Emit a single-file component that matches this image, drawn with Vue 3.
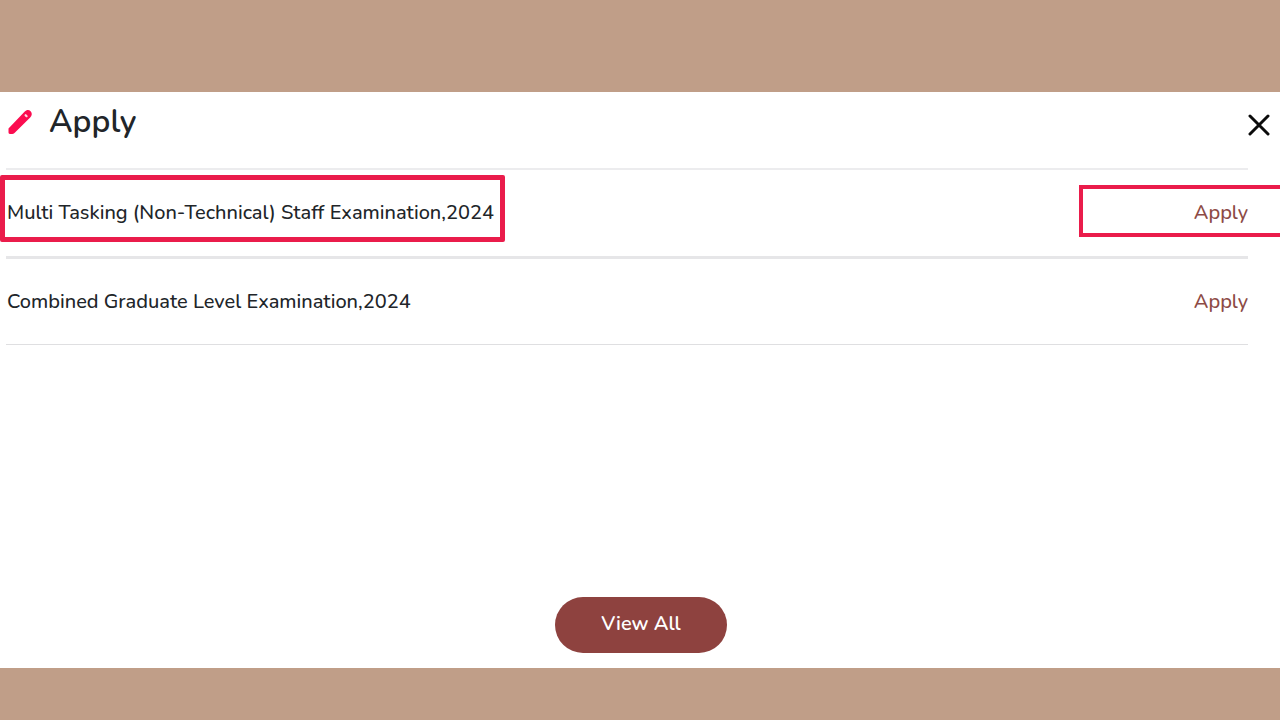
<script setup>
const exams = [
  { id: 1, title: 'Multi Tasking (Non-Technical) Staff Examination,2024', marked: true },
  { id: 2, title: 'Combined Graduate Level Examination,2024', marked: false }
]
</script>

<template>
  <main class="page">
    <section class="panel" aria-labelledby="panel-title">
      <header class="head">
        <svg class="pencil" viewBox="0 0 26 26" aria-hidden="true">
          <path
            fill="#fb0d50"
            d="M1.500 19.600 17.500 2.800C19.500.8 21.700.4 23.600 2.200c1.800 1.800 1.500 4.200-.4 6.200L7.500 24Q6.500 25 5.200 25H2.800Q1.500 25 1.500 23.600Z"
          />
          <path d="m18.600 6.200 1 1" stroke="#ffd3df" stroke-width="2.200" stroke-linecap="round" />
        </svg>
        <h1 id="panel-title">Apply</h1>
        <button class="close" type="button" aria-label="Close">
          <svg viewBox="0 0 22 22" aria-hidden="true">
            <path d="M2 2 20 20M20 2 2 20" stroke="#0b0b0b" stroke-width="3" stroke-linecap="round" />
          </svg>
        </button>
      </header>

      <ul class="list">
        <li v-for="exam in exams" :key="exam.id" class="row" :class="{ marked: exam.marked }">
          <span class="title">{{ exam.title }}</span>
          <a class="apply" href="#">Apply</a>
        </li>
      </ul>

      <footer class="foot">
        <button class="view-all" type="button">View All</button>
      </footer>
    </section>
  </main>
</template>

<style>
body {
  margin: 0;
  background: #c09e88;
}
</style>

<style scoped>
.page {
  box-sizing: border-box;
  min-height: 100vh;
  padding: 92px 0 52px;
  display: flex;
  flex-direction: column;
  overflow: hidden;
  background: #c09e88;
  color: #212529;
  font-family: Nunito, Lato, sans-serif;
}
.panel {
  flex: 1;
  display: flex;
  flex-direction: column;
  background: #fff;
}
.head {
  display: flex;
  align-items: center;
  height: 60px;
  padding: 0 10px 16px 7px;
}
.pencil {
  width: 26px;
  height: 26px;
  margin-right: 16px;
}
h1 {
  flex: 1;
  margin: 0;
  font-size: 32px;
  line-height: 40px;
  font-weight: 600;
}
.close {
  display: flex;
  padding: 0;
  margin-top: 6px;
  border: 0;
  background: none;
  cursor: pointer;
}
.close svg {
  width: 22px;
  height: 22px;
}
.list {
  list-style: none;
  margin: 0 32px 0 6px;
  padding: 0;
  border-top: 2px solid #ececee;
}
.row {
  box-sizing: border-box;
  display: flex;
  align-items: center;
  justify-content: space-between;
  height: 86px;
  border-bottom: 1px solid #dfdfe1;
  font-size: 20px;
  line-height: 28px;
  font-weight: 500;
}
.row.marked {
  height: 89px;
  border-bottom: 3px solid #e6e6e8;
}
.title,
.apply {
  position: relative;
}
.title {
  padding-left: 1px;
}
.apply {
  color: #8d4a45;
  text-decoration: none;
}
/* Highlight frames drawn over the marked row */
.marked .title::after,
.marked .apply::after {
  content: '';
  position: absolute;
  border: 4px solid #ea1c4b;
  pointer-events: none;
}
.marked .title::after {
  inset: -24px -11px -15px -6px;
  border-width: 5px;
  border-radius: 2px;
}
.marked .apply::after {
  inset: -14px -40px -10px -115px;
}
.foot {
  display: flex;
  justify-content: center;
  margin-top: auto;
  padding: 0 0 15px 2px;
}
.view-all {
  min-width: 172px;
  height: 56px;
  padding: 0 46px 2px;
  border: 0;
  border-radius: 28px;
  background: #8e423f;
  color: #fff;
  font: 600 20px/28px Nunito, Lato, sans-serif;
  cursor: pointer;
}
</style>
